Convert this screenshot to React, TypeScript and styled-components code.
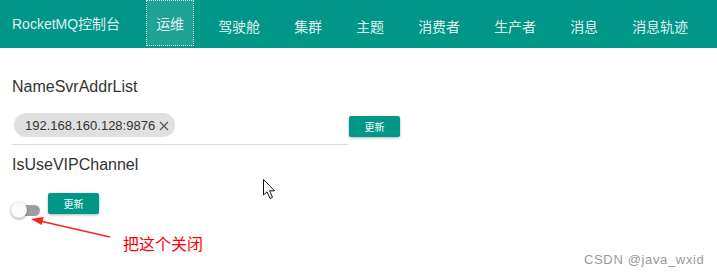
import styled, { createGlobalStyle } from 'styled-components';

const GlobalStyle = createGlobalStyle`
    html, body {
        margin: 0;
        padding: 0;
        background: #fff;
        overflow: hidden;
    }
    body {
        font-family: "Liberation Sans", "Noto Sans CJK SC", Arial, sans-serif;
        color: rgba(0, 0, 0, 0.8);
    }
`;

const Page = styled.div`
    position: relative;
    width: 717px;
    height: 278px;
`;

const NavBar = styled.nav`
    display: flex;
    align-items: flex-start;
    height: 48px;
    background: #009688;
    padding-left: 12px;
    box-sizing: border-box;
`;

const Brand = styled.div`
    height: 46px;
    display: flex;
    align-items: center;
    font-size: 14px;
    color: rgba(255, 255, 255, 0.88);
    margin-right: 26px;
`;

const NavList = styled.div`
    display: flex;
    gap: 14px;
`;

const NavItem = styled.div<{ $active?: boolean }>`
    box-sizing: border-box;
    display: flex;
    align-items: center;
    padding: ${(p) => (p.$active ? '0 9px' : '4px 10px 0')};
    height: ${(p) => (p.$active ? '46px' : '48px')};
    font-size: 14px;
    color: rgba(255, 255, 255, 0.9);
    background: ${(p) => (p.$active ? 'rgba(255, 255, 255, 0.12)' : 'transparent')};
    border: ${(p) => (p.$active ? '1px dotted rgba(255, 255, 255, 0.85)' : 'none')};
`;

const Content = styled.main`
    padding: 0 12px;
`;

const Label = styled.div<{ $top: number }>`
    margin-top: ${(p) => p.$top}px;
    font-size: 16px;
    line-height: 20px;
    color: #333;
`;

const Row = styled.div<{ $top: number }>`
    display: flex;
    align-items: flex-start;
    margin-top: ${(p) => p.$top}px;
`;

const ChipField = styled.div`
    width: 336px;
    padding: 0 0 7px 2px;
    box-sizing: border-box;
    border-bottom: 1px solid #ddd;
`;

const Chip = styled.span`
    display: inline-flex;
    align-items: center;
    height: 24px;
    padding: 0 6px 0 11px;
    border-radius: 12px;
    background: #e0e0e0;
    font-size: 13px;
    color: #333;
`;

const ChipClose = styled.svg`
    margin-left: 4px;
    margin-top: 1px;
`;

const UpdateButton = styled.button<{ $top?: number; $left?: number }>`
    margin-top: ${(p) => p.$top ?? 0}px;
    margin-left: ${(p) => p.$left ?? 0}px;
    width: 51px;
    height: 21px;
    padding: 0;
    border: none;
    border-radius: 2px;
    background: #009688;
    color: #fff;
    font-family: "Noto Sans CJK SC", sans-serif;
    font-size: 10px;
    box-shadow: 0 1px 3px rgba(0, 0, 0, 0.3);
`;

const Toggle = styled.div`
    position: relative;
    width: 29px;
    height: 16px;
    margin: 9px 0 0 -1px;
`;

const ToggleTrack = styled.div`
    position: absolute;
    left: 4px;
    top: 3px;
    width: 25px;
    height: 11px;
    border-radius: 6px;
    background: #9e9e9e;
`;

const ToggleThumb = styled.div`
    position: absolute;
    left: 0;
    top: 0;
    width: 16px;
    height: 16px;
    border-radius: 50%;
    background: #fafafa;
    box-shadow: 0 1px 3px rgba(0, 0, 0, 0.4);
`;

const Overlay = styled.svg`
    position: absolute;
    left: 0;
    top: 0;
    pointer-events: none;
`;

const Annotation = styled.div`
    position: absolute;
    left: 123px;
    top: 233px;
    font-family: "Noto Sans CJK SC", sans-serif;
    font-size: 16px;
    line-height: 20px;
    color: #ff0000;
`;

const Watermark = styled.div`
    position: absolute;
    left: 584px;
    top: 252px;
    font-size: 13px;
    line-height: 16px;
    letter-spacing: 0.65px;
    color: #9a9a9a;
`;

const navItems = ['运维', '驾驶舱', '集群', '主题', '消费者', '生产者', '消息', '消息轨迹'];

export default function App() {
    return (
        <Page>
            <GlobalStyle />
            <NavBar>
                <Brand>RocketMQ控制台</Brand>
                <NavList>
                    {navItems.map((item, i) => (
                        <NavItem key={item} $active={i === 0}>
                            {item}
                        </NavItem>
                    ))}
                </NavList>
            </NavBar>
            <Content>
                <Label $top={29}>NameSvrAddrList</Label>
                <Row $top={16}>
                    <ChipField>
                        <Chip>
                            192.168.160.128:9876
                            <ChipClose width="10" height="10" viewBox="0 0 10 10">
                                <path d="M1 1 L9 9 M9 1 L1 9" stroke="#555" strokeWidth="1.2" />
                            </ChipClose>
                        </Chip>
                    </ChipField>
                    <UpdateButton $top={3} $left={1}>更新</UpdateButton>
                </Row>
                <Label $top={10}>IsUseVIPChannel</Label>
                <Row $top={18}>
                    <Toggle>
                        <ToggleTrack />
                        <ToggleThumb />
                    </Toggle>
                    <UpdateButton $left={8}>更新</UpdateButton>
                </Row>
            </Content>

            <Overlay width="717" height="278" viewBox="0 0 717 278">
                <line x1="110" y1="237" x2="40" y2="221" stroke="#ff2020" strokeWidth="1.3" />
                <polygon points="31,219 43.6,217 41.6,225" fill="#ff2020" />
                <path
                    d="M263.5 179.5 L263.5 195 L267 191.8 L270 198.5 L272.5 197.3 L269.6 190.8 L274.5 190.8 Z"
                    fill="#fff"
                    stroke="#111"
                    strokeWidth="1"
                    strokeLinejoin="round"
                />
            </Overlay>
            <Annotation>把这个关闭</Annotation>
            <Watermark>CSDN @java_wxid</Watermark>
        </Page>
    );
}
